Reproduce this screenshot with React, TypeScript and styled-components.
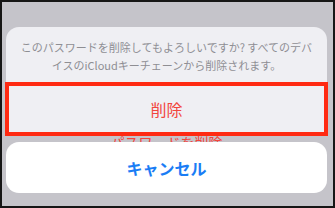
import React from 'react';
import styled, { createGlobalStyle } from 'styled-components';

const GlobalStyle = createGlobalStyle`
  html, body {
    margin: 0;
    padding: 0;
    background: #c5c4ca;
  }
  * {
    box-sizing: border-box;
  }
`;

const Frame = styled.div`
  width: 335px;
  height: 208px;
  border: 2px solid #161616;
  background-color: #c5c4ca;
  padding: 25px 6px 0 4px;
  display: flex;
  flex-direction: column;
  font-family: "Noto Sans CJK JP", "Noto Sans", sans-serif;
  overflow: hidden;
`;

const Sheet = styled.div`
  background-color: #efeff3;
  border-radius: 13px 13px 0 0;
  display: flex;
  flex-direction: column;
`;

const Message = styled.div`
  height: 55px;
  padding-top: 12px;
  text-align: center;
  font-size: 11px;
  line-height: 17.5px;
  color: #8e8e93;
  white-space: nowrap;
`;

const ActionRow = styled.div<{ $highlight?: boolean }>`
  height: 54px;
  margin: 0 -1px;
  display: flex;
  align-items: center;
  justify-content: center;
  border: ${(p) => (p.$highlight ? '4px solid #ff2a12' : 'none')};
  color: #f2453d;
  font-size: 16px;
`;

const PeekRow = styled.div`
  height: 6px;
  overflow: hidden;
  text-align: center;
  color: #f2453d;
  font-size: 14px;
  line-height: 12px;
`;

const CancelButton = styled.div`
  height: 51px;
  background-color: #ffffff;
  border-radius: 13px;
  display: flex;
  align-items: center;
  justify-content: center;
  color: #1a7df5;
  font-size: 16px;
  font-weight: bold;
`;

const App = () => {
  return (
    <>
      <GlobalStyle />
      <Frame>
        <Sheet>
          <Message>
            このパスワードを削除してもよろしいですか? すべてのデバ
            <br />
            イスのiCloudキーチェーンから削除されます。
          </Message>
          <ActionRow $highlight>削除</ActionRow>
        </Sheet>
        <PeekRow>パスワードを削除</PeekRow>
        <CancelButton>キャンセル</CancelButton>
      </Frame>
    </>
  );
};

export default App;
